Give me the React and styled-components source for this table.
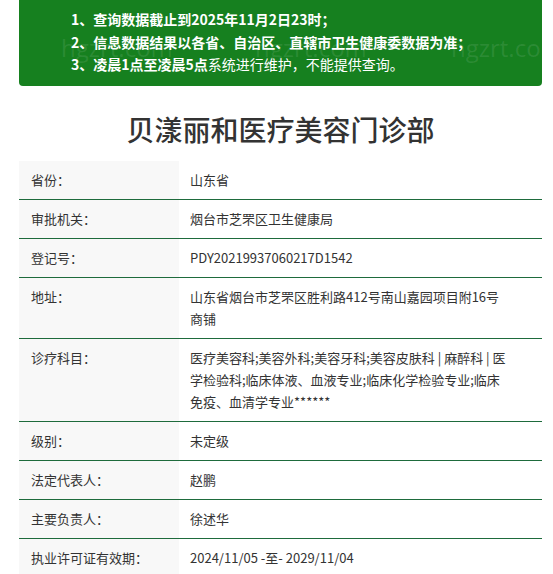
import React from "react";
import styled, { createGlobalStyle } from "styled-components";

const GlobalStyle = createGlobalStyle`
  html, body {
    margin: 0;
    padding: 0;
    background: #fff;
  }
  body {
    font-family: "Noto Sans CJK SC", "Noto Sans", sans-serif;
    color: #333;
  }
`;

// each value is a list of the lines it breaks into in the reference
const rows = [
  { label: "省份：", value: ["山东省"] },
  { label: "审批机关：", value: ["烟台市芝罘区卫生健康局"] },
  { label: "登记号：", value: ["PDY20219937060217D1542"] },
  { label: "地址：", value: ["山东省烟台市芝罘区胜利路412号南山嘉园项目附16号", "商铺"] },
  {
    label: "诊疗科目：",
    value: [
      "医疗美容科;美容外科;美容牙科;美容皮肤科 | 麻醉科 | 医",
      "学检验科;临床体液、血液专业;临床化学检验专业;临床",
      "免疫、血清学专业******",
    ],
  },
  { label: "级别：", value: ["未定级"] },
  { label: "法定代表人：", value: ["赵鹏"] },
  { label: "主要负责人：", value: ["徐述华"] },
  { label: "执业许可证有效期：", value: ["2024/11/05 -至- 2029/11/04"] },
];

function App() {
  return (
    <Page>
      <GlobalStyle />
      <Notice>
        <Watermark style={{ left: 42 }}>hgzrt.com</Watermark>
        <Watermark style={{ left: 236 }}>hgzrt.com</Watermark>
        <Watermark style={{ left: 432 }}>hgzrt.com</Watermark>
        <NoticeLine>
          <b>1、查询数据截止到2025年11月2日23时；</b>
        </NoticeLine>
        <NoticeLine>
          <b>2、信息数据结果以各省、自治区、直辖市卫生健康委数据为准；</b>
        </NoticeLine>
        <NoticeLine>
          <b>3、凌晨1点至凌晨5点</b>系统进行维护，不能提供查询。
        </NoticeLine>
      </Notice>

      <Title>贝漾丽和医疗美容门诊部</Title>

      <Table>
        {rows.map((row) => (
          <Row key={row.label}>
            <Label>{row.label}</Label>
            <Value>
              {row.value.map((line) => (
                <ValueLine key={line}>{line}</ValueLine>
              ))}
            </Value>
          </Row>
        ))}
      </Table>
    </Page>
  );
}

export default App;

const Page = styled.div`
  width: 523px;
  margin-left: 19px;
`;

const Notice = styled.div`
  position: relative;
  overflow: hidden;
  background-color: #16801f;
  color: #fff;
  border-radius: 0 0 4px 4px;
  padding: 8px 0 10px 52px;
  font-size: 14px;
  line-height: 22.5px;
`;

const NoticeLine = styled.div`
  position: relative;
  white-space: nowrap;

  b {
    font-weight: 700;
  }
`;

const Watermark = styled.span`
  position: absolute;
  top: 33px;
  font-family: "Open Sans", sans-serif;
  font-size: 24px;
  line-height: 30px;
  color: rgba(255, 255, 255, 0.1);
  pointer-events: none;
`;

const Title = styled.h1`
  margin: 0;
  padding: 23px 0 12px;
  text-align: center;
  font-size: 28px;
  font-weight: 500;
  line-height: 40px;
  color: #333;
`;

const Table = styled.div`
  display: flex;
  flex-direction: column;
  font-size: 13px;
  line-height: 22px;
`;

const Row = styled.div`
  display: grid;
  grid-template-columns: 160px 1fr;
  border-bottom: 1px solid #1e6b3c;

  &:last-child {
    border-bottom: none;
  }
`;

const Label = styled.div`
  background-color: #f8f8f8;
  padding: 8px 12px;
  color: #333;
`;

const Value = styled.div`
  padding: 8px 12px 8px 11px;
  color: #333;
`;

const ValueLine = styled.div`
  white-space: nowrap;
`;
